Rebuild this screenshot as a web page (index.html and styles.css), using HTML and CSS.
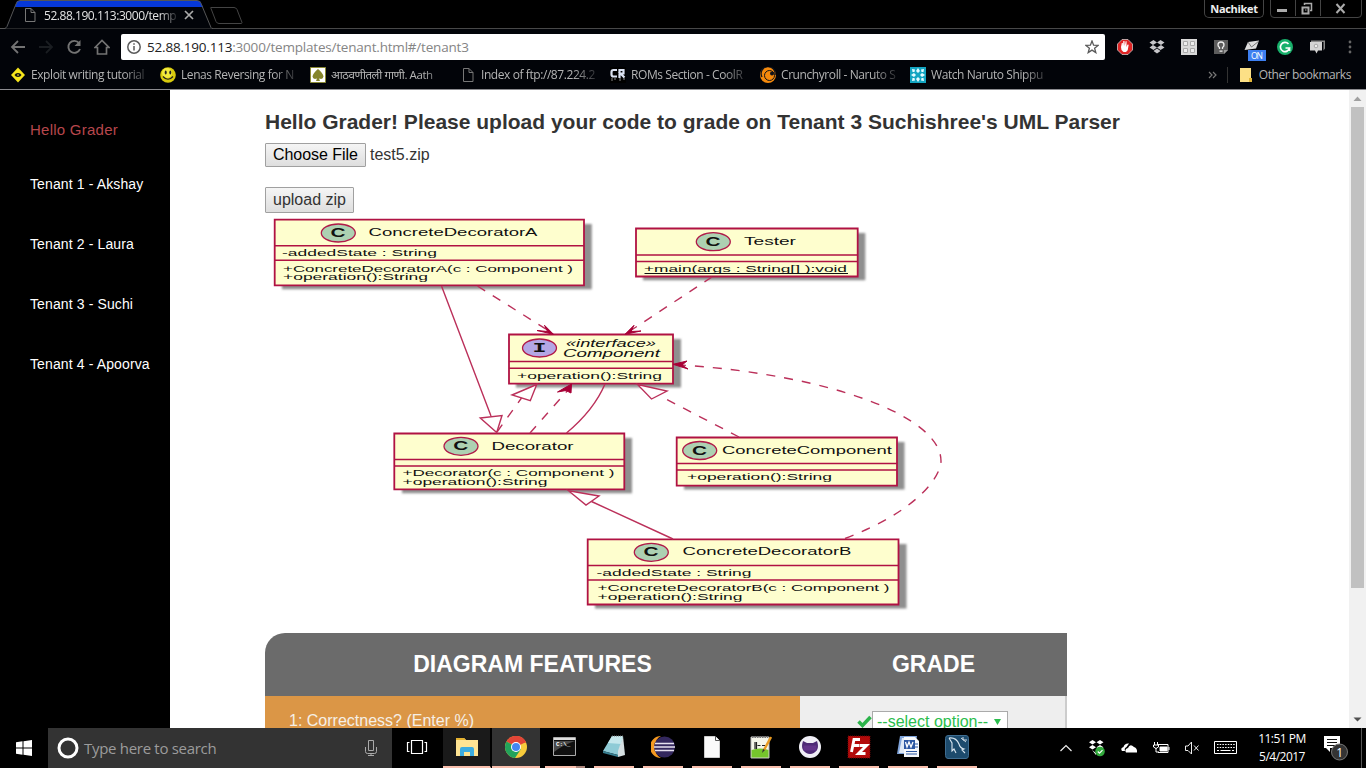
FILE: index.html
```html
<!DOCTYPE html>
<html lang="en">
<head>
<meta charset="utf-8">
<title>Tenant 3</title>
<link rel="stylesheet" href="styles.css">
</head>
<body>
<header class="browser">
  <div class="tabstrip">
    <svg class="tab-shape" width="260" height="29" viewBox="0 0 260 29" fill="none">
      <path d="M5 28.5L17 1h184l11 27.5z" fill="#020409"/>
      <path d="M17 1h183l3 6H15z" fill="#0638d8"/>
      <path d="M0 28.5h5q1-.5 2-2L16 4q1-3.500 4-3.500h177q3 0 4 3l10 24q.5 1 2 1" stroke="#555"/>
      <path d="M211 7.500h23q2 0 3 2l5 13q0 1-1 1h-22q-2 0-3-2l-5-13q-1-1 0-1z" stroke="#444"/>
    </svg>
    <div class="tab">
      <svg width="12" height="14" viewBox="0 0 12 14" fill="none" stroke="#777"><path d="M1.500.5h5.500l4 4v9H1.500zM7 .5v4h4"/></svg>
      <span class="tab-title">52.88.190.113:3000/temp</span>
      <svg width="10" height="10" viewBox="0 0 10 10" stroke="#aaa" stroke-width="1.700"><path d="M1 1l8 8M9 1L1 9"/></svg>
    </div>
    <div class="profile">Nachiket</div>
    <div class="winctl">
      <svg width="92" height="18" viewBox="0 0 92 18" fill="none" stroke="#ababab">
        <path d="M.5 0v14q0 3.500 3.500 3.500h84q3.500 0 3.500-3.500V0M25.500 0v16M50.500 0v16" stroke="#444"/>
        <path d="M7 10.500h10" stroke-width="3"/>
        <path d="M32.500 7.500h6v6h-6z" stroke-width="2"/><path d="M34.500 5V3.500h7v7H40" stroke-width="1.500"/><path d="M35 10h1.500"/>
        <path d="M66.500 4l8 9M74.500 4l-8 9" stroke-width="2"/>
      </svg>
    </div>
  </div>
  <div class="toolbar">
    <div class="nav">
      <svg width="16" height="16" viewBox="0 0 16 16" fill="none" stroke="#737373" stroke-width="1.800"><path d="M15 8H2M8 2L2 8l6 6"/></svg>
      <svg width="16" height="16" viewBox="0 0 16 16" fill="none" stroke="#1a1d21" stroke-width="1.800"><path d="M1 8h13M8 2l6 6-6 6"/></svg>
      <svg width="16" height="16" viewBox="0 0 16 16" fill="none" stroke="#737373" stroke-width="1.900"><path d="M13 4A6 6 0 1 0 14 10"/><path d="M14.500 1v6h-6z" fill="#737373" stroke="none"/></svg>
      <svg width="16" height="16" viewBox="0 0 16 16" fill="none" stroke="#737373" stroke-width="1.700"><path d="M1 8.500L8 1.500l7 7h-2.500V15h-9V8.500z"/></svg>
    </div>
    <div class="omnibox">
      <svg width="14" height="14" viewBox="0 0 14 14" fill="none" stroke="#5a5a5a" stroke-width="1.500"><circle cx="7" cy="7" r="6.200"/><path d="M7 6v4.500M7 3.200v1.600"/></svg>
      <span class="url"><span class="host">52.88.190.113</span>:3000/templates/tenant.html#/tenant3</span>
      <svg width="14" height="14" viewBox="0 0 14 14" fill="none" stroke="#5a5a5a" stroke-width="1.300"><path d="M7 1l1.600 4.200 4.500.2-3.500 2.800 1.200 4.400L7 10.100l-3.800 2.500 1.200-4.400L.9 5.400l4.500-.2z"/></svg>
    </div>
    <div class="exts">
      <svg width="16" height="16" viewBox="0 0 16 16"><path d="M5 .5h6L15.500 5v6L11 15.500H5L.5 11V5z" fill="#df2525" stroke="#ddd" stroke-width=".7"/><path d="M4 8l.8-4 1 0L6 7l.3-5h1.200l.3 5 .8-4.800h1L9.500 8l1-2.500 1.200.3-1 5.500-1.700 1.700H6.500L4.500 11z" fill="#fff"/></svg>
      <svg width="16" height="16" viewBox="0 0 16 16" fill="#c6c6c9"><path d="M4.500 1L8 3.500 4 6 .5 3.500zM11.500 1L8 3.500 12 6l3.500-2.500zM4 6l4 2.500L4.500 11 .5 8.500zM12 6L8 8.500l3.500 2.500 4-2.500zM4.500 12L8 9.500l3.500 2.500L8 14.500z"/></svg>
      <svg width="16" height="16" viewBox="0 0 16 16"><path d="M0 0h16v16H0z" fill="#d9d9d9"/><path d="M2.500 2.500h4v4h-4zM9.500 2.500h4v4h-4zM2.500 9.500h4v4h-4zM9.500 9.500h4v4h-4z" fill="#eee" stroke="#aaa"/></svg>
      <svg width="16" height="16" viewBox="0 0 16 16"><path d="M1 1h14v10l-4 4H1z" fill="#5c5c5c"/><path d="M15 11l-4 4v-4z" fill="#999"/><path d="M6.500 10V8.500Q5 7.500 5 6a3 3 0 0 1 6 0Q11 7.500 9.500 8.500V10M6.500 12.200h3" fill="none" stroke="#eee" stroke-width="1.300"/></svg>
      <svg class="wide" width="22" height="24" viewBox="0 0 22 24"><path d="M4 3l11-1.500-3 8L.500 11z" fill="#ddd"/><path d="M4 3l3.500 5L15 2" fill="none" stroke="#777"/><path d="M4 11h18v11H4z" fill="#3d7ff0"/><text x="7" y="19.800" class="on" textLength="12">ON</text></svg>
      <svg width="16" height="16" viewBox="0 0 16 16"><circle cx="8" cy="8" r="8" fill="#18b06b"/><path d="M11.500 5A4.600 4.600 0 1 0 12.500 9H8.500M12.500 9v3" fill="none" stroke="#fff" stroke-width="1.700"/></svg>
      <svg width="17" height="16" viewBox="0 0 17 16"><path d="M2 1.500h14v8l-1.500 2V3H2z" fill="#8c8c8c"/><path d="M1 3h12v8.500H9L7.500 14.500 6 11.500H1z" fill="#d4d4d4"/><circle cx="7" cy="7" r="1.800" fill="#eee" stroke="#999" stroke-width=".8"/></svg>
      <svg width="16" height="16" viewBox="0 0 16 16" fill="#666"><circle cx="8" cy="3" r="1.400"/><circle cx="8" cy="8" r="1.400"/><circle cx="8" cy="13" r="1.400"/></svg>
    </div>
  </div>
  <nav class="bookmarks">
    <div class="bm"><svg width="16" height="16" viewBox="0 0 16 16"><path d="M8 .5L15 8l-7 7.500L1 8z" fill="#f7e61c"/><path d="M4.500 8q1-2 3.500-2t3.500 2q-1 2-3.500 2T4.500 8z" fill="#111"/><path d="M7 8h2" stroke="#f7e61c"/></svg><span class="bm-text">Exploit writing tutorial</span></div>
    <div class="bm"><svg width="16" height="16" viewBox="0 0 16 16"><circle cx="8" cy="8" r="7.800" fill="#d8ca0d"/><circle cx="7" cy="6" r="5" fill="#f2ea3e"/><ellipse cx="5.700" cy="5.500" rx="1" ry="2" fill="#222"/><ellipse cx="10.300" cy="5.500" rx="1" ry="2" fill="#222"/><path d="M3 9.500q5 5.500 10 0" fill="none" stroke="#222" stroke-width="1.200"/></svg><span class="bm-text">Lenas Reversing for N</span></div>
    <div class="bm"><svg width="16" height="16" viewBox="0 0 16 16"><path d="M.5.500h15v15H.5z" fill="#fff" stroke="#8b8b35"/><path d="M8 2q5 4 5.500 7.500Q13 13 9 11.500L10 14H6l1-2.500q-4 1.500-4.500-2Q3 6 8 2z" fill="#85852b"/></svg><span class="bm-text hindi">आठवणीतली गाणी. Aath</span></div>
    <div class="bm"><svg width="16" height="16" viewBox="0 0 16 16" fill="none" stroke="#777"><path d="M3.500 1.500H9l4 4v9H3.500zM9 1.500v4h4"/></svg><span class="bm-text">Index of ftp://87.224.2</span></div>
    <div class="bm"><svg width="16" height="16" viewBox="0 0 16 16"><path d="M0 0h16v16H0z" fill="#000"/><path d="M7 3H3.500Q1.500 3 1.500 5V7.500Q1.500 9.500 3.500 9.500H7M9.500 11V3h4v3.500h-3l4 4" fill="none" stroke="#dce3f3" stroke-width="2.200"/><path d="M2 11v3M5 11v2M10 11v3M14 11v2" stroke="#888"/></svg><span class="bm-text">ROMs Section - CoolR</span></div>
    <div class="bm"><svg width="16" height="16" viewBox="0 0 16 16"><circle cx="8" cy="8" r="8" fill="#f5890c"/><path d="M2 10A7 7 0 1 1 15 8" fill="none" stroke="#10131a" stroke-width="1.300"/><circle cx="9.500" cy="8.500" r="5" fill="#f5890c" stroke="#10131a"/><circle cx="12" cy="6.500" r="2" fill="#10131a"/></svg><span class="bm-text">Crunchyroll - Naruto S</span></div>
    <div class="bm"><svg width="16" height="16" viewBox="0 0 16 16"><path d="M0 0h16v16H0z" fill="#13a5c2"/><path d="M8 1l2 3-2 2-2-2zM8 10l2 2-2 3-2-3zM1 8l3-2 2 2-2 2zM10 8l2-2 3 2-3 2zM2 2l3 .5-.5 2.500-2 0zM14 2l-3 .5.5 2.500 2 0zM2 14l3-.5-.5-2.500-2 0zM14 14l-3-.5.5-2.500 2 0z" fill="#e4fbff"/></svg><span class="bm-text">Watch Naruto Shippu</span></div>
    <div class="bm-end">
      <svg width="9" height="8" viewBox="0 0 9 8" fill="none" stroke="#777" stroke-width="1.200"><path d="M1 1l3 3-3 3M5 1l3 3-3 3"/></svg>
      <i class="sep"></i>
      <svg width="12" height="14" viewBox="0 0 12 14"><path d="M0 0h11v10h1v4H0z" fill="#fce086"/><path d="M9 14v-4h3v4z" fill="#e2b73b"/></svg>
      <span class="other">Other bookmarks</span>
    </div>
  </nav>
</header>

<div class="page">
  <aside class="sidebar">
    <div class="hello">Hello Grader</div>
    <a>Tenant 1 - Akshay</a>
    <a>Tenant 2 - Laura</a>
    <a>Tenant 3 - Suchi</a>
    <a>Tenant 4 - Apoorva</a>
  </aside>
  <main class="main">
    <h1 class="title">Hello Grader! Please upload your code to grade on Tenant 3 Suchishree's UML Parser</h1>
    <div class="file-row"><span class="btn choose">Choose File</span><span class="fname">test5.zip</span></div>
    <div><span class="btn upload">upload zip</span></div>
    <svg class="uml" width="700" height="400" viewBox="265 213 700 400">
      <defs>
        <filter id="soft" x="-10%" y="-20%" width="120%" height="150%"><feGaussianBlur stdDeviation="1.300"/></filter>
      </defs>
      <g class="shadow" filter="url(#soft)">
        <path d="M282 224h309.800v65.300h-309.800zM643 233h222.300v47.300H643zM516 339h165v48.500h-165zM402 438h230v55.300H402zM684 442h220.500v47.500h-220.500zM595 544h311.500v64.500H595z"/>
      </g>
      <g class="box">
        <path d="M274.700 219.700h309.300v65.600h-309.300zM636 228.500h221.700v48H636zM509 334.500h164v49.200h-164zM394.300 433.500h230v55.800h-230zM676.700 437.500h220.300v48.200h-220.300zM587.700 539.300h310.800v65.200h-310.800z"/>
        <path class="rule" d="M275 245.700h309M275 260.300h309M636 255h221.700M636 261.500h221.700M509 361.500h164M509 368.300h164M394 459.500h230M394 466h230M677 463.500h220M677 470h220M588 565.500h310.500M588 580h310.500"/>
      </g>
      <g class="dot">
        <ellipse cx="338.300" cy="233" rx="17" ry="9"/><ellipse cx="713.300" cy="241.700" rx="17" ry="9"/>
        <ellipse class="iface" cx="539.500" cy="348" rx="17" ry="9"/><ellipse cx="461" cy="446.300" rx="17" ry="9"/>
        <ellipse cx="699.700" cy="450.500" rx="17" ry="9"/><ellipse cx="651.300" cy="552.300" rx="17" ry="9"/>
      </g>
      <g class="letter">
        <text x="330.500" y="237" textLength="15" lengthAdjust="spacingAndGlyphs">C</text>
        <text x="705.500" y="245.700" textLength="15" lengthAdjust="spacingAndGlyphs">C</text>
        <text x="532.500" y="352" textLength="14" lengthAdjust="spacingAndGlyphs" class="mono">I</text>
        <text x="453.200" y="450.300" textLength="15" lengthAdjust="spacingAndGlyphs">C</text>
        <text x="692" y="454.500" textLength="15" lengthAdjust="spacingAndGlyphs">C</text>
        <text x="643.500" y="556.300" textLength="15" lengthAdjust="spacingAndGlyphs">C</text>
      </g>
      <g class="name">
        <text x="368.500" y="236" textLength="169" lengthAdjust="spacingAndGlyphs">ConcreteDecoratorA</text>
        <text x="744" y="245" textLength="52" lengthAdjust="spacingAndGlyphs">Tester</text>
        <text x="566" y="347" textLength="90" lengthAdjust="spacingAndGlyphs" class="it">«interface»</text>
        <text x="563" y="356.700" textLength="97" lengthAdjust="spacingAndGlyphs" class="it">Component</text>
        <text x="491.500" y="449.500" textLength="82" lengthAdjust="spacingAndGlyphs">Decorator</text>
        <text x="722" y="453.800" textLength="170" lengthAdjust="spacingAndGlyphs">ConcreteComponent</text>
        <text x="682.500" y="555.400" textLength="169" lengthAdjust="spacingAndGlyphs">ConcreteDecoratorB</text>
      </g>
      <g class="member">
        <text x="282" y="256" textLength="155" lengthAdjust="spacingAndGlyphs">-addedState : String</text>
        <text x="283" y="272" textLength="290" lengthAdjust="spacingAndGlyphs">+ConcreteDecoratorA(c : Component )</text>
        <text x="283" y="280.400" textLength="145" lengthAdjust="spacingAndGlyphs">+operation():String</text>
        <text x="644" y="271.800" textLength="203" lengthAdjust="spacingAndGlyphs">+main(args : String[] ):void</text>
        <text x="517" y="379.400" textLength="145" lengthAdjust="spacingAndGlyphs">+operation():String</text>
        <text x="402.500" y="476.300" textLength="212" lengthAdjust="spacingAndGlyphs">+Decorator(c : Component )</text>
        <text x="402.500" y="485" textLength="145" lengthAdjust="spacingAndGlyphs">+operation():String</text>
        <text x="687" y="480.400" textLength="145" lengthAdjust="spacingAndGlyphs">+operation():String</text>
        <text x="596.500" y="575.800" textLength="155" lengthAdjust="spacingAndGlyphs">-addedState : String</text>
        <text x="597.500" y="591.200" textLength="292" lengthAdjust="spacingAndGlyphs">+ConcreteDecoratorB(c : Component )</text>
        <text x="597.500" y="600" textLength="145" lengthAdjust="spacingAndGlyphs">+operation():String</text>
      </g>
      <path d="M644.500 273.500H848" stroke="#111"/>
      <g class="edge">
        <path d="M441.500 286L491 416M605 384Q594 410 566.500 433M591.500 501.500L673 539"/>
        <path class="head" d="M480.300 418L502 415.500 496.700 432.500zM536.700 384.500L512 395l18.300 5.700zM637.500 384.500L667 391l-15.500 8zM568.500 490.700L599 496l-13 9z"/>
        <g class="dash">
          <path d="M477.500 286L549 331M712 277L630 331M497 432L521.500 398M530 433L568 390M739 437L660 396"/>
          <path d="M845 538.500C920 510 941 475 941 461C941 417 833 375 681 365"/>
        </g>
        <path class="arrow" d="M553.500 334.300l-9-9 3 6.200-10.500-1zM625 334.300l9-9-3 6.200 10 -.5zM571.500 384l-14 8 8.500-1.500 5 2.500zM673 364.300l14-3.300-5 4 6 4z"/>
      </g>
    </svg>
    <div class="table">
      <div class="th">DIAGRAM FEATURES</div><div class="th">GRADE</div>
      <div class="td d1">1: Correctness? (Enter %)</div>
      <div class="td d2"><svg width="15" height="13" viewBox="0 0 15 13" fill="none" stroke="#2bb34a" stroke-width="3.500"><path d="M1.500 6.500l4 4 8-8.500"/></svg><span class="select"><span>--select option--</span><svg width="7" height="7" viewBox="0 0 7 7" fill="#2bbd4d"><path d="M0 0h7L3.500 6z"/></svg></span></div>
    </div>
  </main>
  <div class="scrollbar">
    <svg width="17" height="17" viewBox="0 0 17 17" fill="#a0a0a0"><path d="M4.500 11h8l-4-4.500z"/></svg>
    <div class="thumb"></div>
    <svg width="17" height="17" viewBox="0 0 17 17" fill="#505050"><path d="M4.500 6.500h8l-4 4z"/></svg>
  </div>
</div>

<footer class="taskbar">
  <div class="start"><svg width="16" height="16" viewBox="0 0 16 16" fill="#fff"><path d="M0 2.200l6.500-.9v6.200H0zM7.500 1.200L16 0v7.500H7.500zM0 8.500h6.500v6.200L0 13.800zM7.500 8.500H16V16l-8.500-1.200z"/></svg></div>
  <div class="search">
    <svg width="22" height="22" viewBox="0 0 22 22" fill="none" stroke="#fff" stroke-width="3"><circle cx="11" cy="11" r="9"/></svg>
    <span class="ph">Type here to search</span>
    <svg width="12" height="16" viewBox="0 0 12 16" fill="none" stroke="#aaa"><path d="M3.500.5h5v10h-5zM.5 7v4.500q0 2 2 2h7q2 0 2-2V7M6 13.500v2M3 15.500h6"/></svg>
  </div>
  <div class="apps">
    <div class="app tv"><svg width="22" height="16" viewBox="0 0 22 16" fill="none" stroke="#fff" stroke-width="1.200"><path d="M5.500 1.500h11v13h-11zM3.500 3.500H1.500v9h2M18.500 3.500h2v9h-2"/></svg></div>
    <div class="app explorer"><svg width="24" height="20" viewBox="0 0 24 20"><path d="M1 1h8l2 2h12v16H1z" fill="#ffe493"/><path d="M1 1h8l2 2H1z" fill="#e6b331"/><path d="M5 19v-7q0-2 2-2h10q2 0 2 2v7h-4v-4H9v4z" fill="#3cace0"/></svg></div>
    <div class="app chrome"><svg width="22" height="22" viewBox="0 0 22 22"><circle cx="11" cy="11" r="11" fill="#f8cb3b"/><path d="M11 11L1.500 5.500A11 11 0 0 1 21 6z" fill="#e24537"/><path d="M11 11L1.500 5.500A11 11 0 0 0 10 22l6-9z" fill="#22a35b"/><path d="M11 6h10" stroke="#e24537" stroke-width="1"/><circle cx="11" cy="11" r="5" fill="#fff"/><circle cx="11" cy="11" r="4" fill="#4487f4"/></svg></div>
    <div class="app run cmd"><svg width="23" height="20" viewBox="0 0 23 20"><path d="M.5.500h22v18H.5z" fill="#101010" stroke="#aaa"/><path d="M1 2h21" stroke="#ddd" stroke-width="2"/><path d="M1 4h21Q10 8 1 15z" fill="#4a4a4a"/><text x="3" y="9" class="prompt">C:\_</text></svg></div>
    <div class="app run"><svg width="24" height="24" viewBox="0 0 24 24"><path d="M10 1h11l-5 19-15-4z" fill="#8fcbd6"/><path d="M21 1l2 19-7 2V16z" fill="#d5dfe2"/><path d="M10 1h11l-2 8-13-1z" fill="#c5e7ec"/><path d="M1 16l15 4v2L1 18z" fill="#377e91"/><path d="M10 1h11" stroke="#777" stroke-dasharray="1 1"/></svg></div>
    <div class="app run"><svg width="24" height="22" viewBox="0 0 24 22"><path d="M10 0A11 11 0 0 0 10 22Q4 19 4 11T10 0z" fill="#f59a22"/><circle cx="13.500" cy="11" r="10.500" fill="#34285e"/><path d="M4 7.500h19M3 11h21M4 14.500h19" stroke="#e6e1ef" stroke-width="1.700"/></svg></div>
    <div class="app run"><svg width="16" height="22" viewBox="0 0 16 22"><path d="M.5.500h11l4 4v17H.5z" fill="#fafafa" stroke="#ccc"/><path d="M11.500 0v4.500H16" fill="none" stroke="#555"/></svg></div>
    <div class="app run"><svg width="22" height="24" viewBox="0 0 22 24"><path d="M1 2h18v21H1z" fill="#f5f5ea" stroke="#bbb"/><path d="M1.500 15q8-3 17 0v7.500h-17z" fill="#75c52c"/><path d="M2 2h16" stroke="#777" stroke-width="2" stroke-dasharray="1.500 1"/><path d="M5 7v7M7.500 10.500h3M12 10.500h3M6.500 7v7" stroke="#222" stroke-width="1.200"/><path d="M21 2L14 15" stroke="#e89a21" stroke-width="2.500"/><path d="M13 14L12 18l3-3z" fill="#333"/></svg></div>
    <div class="app run"><svg width="22" height="22" viewBox="0 0 22 22"><circle cx="11" cy="11" r="11" fill="#f0eff6"/><path d="M4 5l4 2h6l4-2q2 6 0 9-3 4-7 4t-7-4q-2-3 0-9z" fill="#4e2b76"/><path d="M4.500 12h13" stroke="#63358a" stroke-width="5"/></svg></div>
    <div class="app run"><svg width="24" height="24" viewBox="0 0 24 24"><path d="M1 1h22v22H1z" fill="#b30a0a" stroke="#6b0707" stroke-dasharray="1 1"/><path d="M13 4.500H7L4.500 17M6 10.500h6M12.500 10.500h7l-8 8h7" fill="none" stroke="#fff" stroke-width="2.900"/></svg></div>
    <div class="app run"><svg width="24" height="24" viewBox="0 0 24 24"><path d="M4 1h17l-3 18H1Z" fill="#80a4da"/><path d="M6 3h13v15H3z" fill="#dfe9f6"/><path d="M8 2h11l4 4v16H8z" fill="#f7f9fc"/><path d="M8 5h11v9H8z" fill="#2d58a3"/><path d="M9.500 7l1.500 5 2-5 2 5 2-5" fill="none" stroke="#fff" stroke-width="1.300"/><path d="M10 16.500h11M10 19h11M19 9h3M19 12h3" stroke="#2d58a3"/></svg></div>
    <div class="app run"><svg width="24" height="24" viewBox="0 0 24 24"><path d="M3 .5h18q2.500 0 2.500 3v17q0 3-2.500 3H3q-2.500 0-2.500-3v-17q0-3 2.500-3z" fill="#1d4b6d" stroke="#3f6d91"/><path d="M4 3q7-1 10 6 1 4 5 5l-2 1 3 3M4 3l3 5v8l2-2 2 4" fill="none" stroke="#dde9f2" stroke-width="1.100"/><path d="M16 3l5 4M18 2v3h4" stroke="#cfdbe4" fill="none"/></svg></div>
  </div>
  <div class="tray">
    <svg class="up" width="14" height="16" viewBox="0 0 14 16" fill="none" stroke="#eee" stroke-width="1.200"><path d="M1.500 11L7 5.500l5.500 5.500"/></svg>
    <svg width="18" height="18" viewBox="0 0 18 18" fill="#fff"><path d="M4.500 1L8 3.200 4.500 5.400 1 3.200zM12 1L8.500 3.200 12 5.400l3.500-2.200zM4.500 6L8 8.200 4.500 10.400 1 8.200zM12 6L8.500 8.200 12 10.400l3.500-2.200zM4 11l4 3v2z"/><circle cx="12" cy="12.500" r="4.800" fill="#32a93c"/><path d="M9.800 12.500l1.700 1.700 3-3" stroke="#fff" stroke-width="1.200" fill="none"/></svg>
    <svg width="18" height="16" viewBox="0 0 18 16" fill="#fff"><path d="M2 11Q0 8 3.500 7 4.500 3 9 3.500L6.500 7Q4 8 5 11z"/><path d="M6 12.500q-2-3 2-4.500Q10 3 14 7q3.500 1 3 5.500z"/></svg>
    <svg width="18" height="16" viewBox="0 0 18 16" fill="none" stroke="#fff"><path d="M6 4.500h10v8H6M17 7v3M2.500 2v3M5.500 2v3M1.500 5h5v2q-2.500 3-5 0zM4 8v4h3"/><path d="M8 7h7v4H8z" fill="#fff"/></svg>
    <svg width="16" height="16" viewBox="0 0 16 16" fill="none" stroke="#eee"><path d="M1.500 6h2.500l3.500-4v12L4 10.500H1.500zM10 5.500l4.500 5M14.500 5.500l-4.500 5"/></svg>
    <svg width="24" height="14" viewBox="0 0 24 14" fill="none" stroke="#fff"><path d="M.5.500h22v12H.5z"/><path d="M3 3.500h18M3 6.500h18" stroke-dasharray="1.500 1.200"/><path d="M3 9.500h2M6.500 9.500h10M18 9.500h2"/></svg>
    <div class="clock"><span>11:51 PM</span><span>5/4/2017</span></div>
    <div class="notif"><svg width="26" height="26" viewBox="0 0 26 26"><path d="M1 1h16v12H7v4l-4-4H1z" fill="#fff"/><path d="M4 4.500h10M4 7.500h10M4 10.500h8" stroke="#111"/><circle cx="16.500" cy="17" r="8" fill="#343434" stroke="#777"/><text x="13.300" y="21.500" class="badge">1</text></svg></div>
    <i class="peek"></i>
  </div>
</footer>
</body>
</html>
```
FILE: styles.css
```css
* { box-sizing: border-box; }
body { margin: 0; width: 1366px; height: 768px; overflow: hidden; display: flex; flex-direction: column; background: #fff; font-family: "Liberation Sans", Arial, sans-serif; }
svg { display: block; flex: none; }
.browser { height: 90px; flex: none; background: #020409; color: #b4b4b4; font-family: "Open Sans", "Noto Sans", sans-serif; border-bottom: 1px solid #8c8c90; }
.tabstrip { height: 29px; background: #000; border-bottom: 1px solid #484848; position: relative; display: flex; }
.tab-shape { position: absolute; left: 0; top: 0; }
.tab { position: relative; width: 200px; padding: 2px 6px 0 24px; display: flex; align-items: center; height: 28px; }
.tab-title { margin-left: 8px; width: 137px; margin-right: 3px; white-space: nowrap; font-size: 12px; letter-spacing: -0.45px; color: #e4e4e4; mask-image: linear-gradient(90deg, #000 115px, transparent 136px); }
.profile { margin-left: auto; width: 60px; height: 18px; border: 1px solid #444; border-top: 0; border-radius: 0 0 5px 5px; text-align: center; font-size: 11px; line-height: 17px; letter-spacing: -0.3px; font-weight: 700; color: #eee; }
.winctl { margin: 0 4px 0 6px; }
.toolbar { height: 35px; padding: 5px 9px 4px 10px; display: flex; align-items: center; }
.nav { display: flex; gap: 12px; }
.omnibox { margin-left: 11px; width: 984px; height: 26px; background: #fff; border-radius: 2px; padding: 0 6px; display: flex; align-items: center; flex: none; }
.url { margin-left: 6px; flex: 1; font-size: 13.500px; letter-spacing: -0.2px; color: #858585; }
.host { color: #222; }
.exts { margin-left: 12px; display: flex; gap: 16px; align-items: flex-start; height: 16px; flex: none; }
.wide { margin: 0 -5px 0 -1px; }
.on { font: 8.500px "Open Sans", sans-serif; fill: #fff; }
.bookmarks { height: 25px; padding: 0 15px 4px 10px; display: flex; align-items: center; font-size: 12px; letter-spacing: -0.42px; }
.bm { width: 150px; display: flex; align-items: center; flex: none; }
.bm-text { margin-left: 5px; width: 124px; white-space: nowrap; mask-image: linear-gradient(90deg, #000 92px, transparent 122px); }
.hindi { font-size: 11.500px; }
.bm-end { margin-left: auto; display: flex; align-items: center; white-space: nowrap; }
.sep { width: 1px; height: 16px; background: #333; margin: 0 12px 0 10px; }
.other { margin-left: 7px; }
.page { height: 638px; flex: none; display: flex; overflow: hidden; }
.sidebar { width: 170px; flex: none; background: #000; padding: 30px 0 0 30px; color: #fff; white-space: nowrap; }
.hello { font-size: 15px; letter-spacing: 0.25px; line-height: 20px; color: #b7474c; margin-bottom: 34px; }
.sidebar a { display: block; font-size: 14px; letter-spacing: 0.12px; line-height: 20px; margin-bottom: 40px; }
.main { flex: 1; padding: 17px 0 0 95px; color: #333; min-width: 0; }
.title { margin: 0; font-size: 21px; line-height: 30px; font-weight: bold; white-space: nowrap; }
.file-row { margin-top: 6px; height: 24px; display: flex; align-items: center; font-size: 16px; margin-bottom: 20px; }
.btn { display: inline-block; height: 24px; line-height: 21px; border: 1px solid #a0a0a0; border-radius: 1px; background: linear-gradient(#f5f5f5, #dedede); padding: 0 7px; font-size: 16px; white-space: nowrap; }
.choose { width: 101px; color: #000; letter-spacing: -0.05px; }
.upload { width: 89px; height: 26px; line-height: 23px; display: block; }
.fname { margin-left: 4px; }
.uml { overflow: visible; }
.shadow { fill: #8f8f8f; }
.box { fill: #fefece; stroke: #b01243; stroke-width: 1.800; }
.rule { stroke-width: 1.400; }
.dot { fill: #add1b2; stroke: #b01a48; stroke-width: 1.300; }
.iface { fill: #b4a7e5; }
.letter { font: bold 12px "Liberation Sans", sans-serif; fill: #111; }
.mono { font-family: "Liberation Mono", monospace; }
.name { font: 11px "Liberation Sans", sans-serif; fill: #111; }
.it { font-style: italic; }
.member { font: 9.800px "Liberation Sans", sans-serif; fill: #111; }
.edge { fill: none; stroke: #bb305a; stroke-width: 1.400; }
.head { fill: #fff; }
.dash { stroke-dasharray: 9 9; }
.arrow { fill: #a80036; stroke: #a80036; stroke-width: 1; }
.table { margin-top: 20px; width: 802px; display: grid; grid-template-columns: 535px 267px; border-top-left-radius: 20px; overflow: hidden; }
.th { height: 63px; line-height: 62px; background: #6b6b6b; color: #fff; font-weight: bold; font-size: 23px; text-align: center; }
.td { height: 60px; font-size: 16px; }
.d1 { background: #db9646; color: #f5efe6; padding: 16px 24px; line-height: 18px; }
.d2 { background: #eee; border-right: 2px solid #ccc; padding: 15px 0 0 57px; display: flex; align-items: flex-start; }
.d2 > svg { margin-top: 4px; }
.select { width: 136px; height: 22px; border: 1px solid #aaa; background: #fff; color: #2bbd4d; display: flex; align-items: center; padding: 0 6px 0 4px; justify-content: space-between; }
.scrollbar { width: 17px; flex: none; background: #f1f1f1; display: flex; flex-direction: column; align-items: center; }
.thumb { width: 13px; height: 481px; background: #c1c1c1; margin-bottom: auto; }
.taskbar { height: 40px; flex: none; background: #000; display: flex; font-family: "Open Sans", "Noto Sans", sans-serif; color: #fff; }
.start { width: 48px; display: flex; align-items: center; justify-content: center; }
.search { width: 344px; background: #333; display: flex; align-items: center; padding: 0 15px 0 9px; }
.ph { margin-left: 5px; flex: 1; font-size: 15px; letter-spacing: -0.3px; color: #9c9c9c; }
.apps { display: flex; }
.app { width: 49px; height: 40px; display: flex; align-items: center; justify-content: center; border: 0 solid #000; border-bottom: 2px solid transparent; }
.tv { width: 51px; padding-right: 2px; }
.explorer { width: 48px; background: #1a1a1a; border-bottom-color: #f9bfad; border-right: 1px solid #000; }
.chrome { margin-left: 1px; width: 48px; background: #333; border-bottom-color: #f9bfad; }
.run { position: relative; }
.run::after { content: ""; position: absolute; left: 5px; right: 4px; bottom: -2px; height: 2px; background: #f9bfad; }
.cmd::after { background: linear-gradient(90deg, #f9bfad 31px, #ad877d 31px); }
.prompt { font: bold 6px "Liberation Mono", monospace; fill: #fff; }
.tray { margin-left: auto; display: flex; align-items: center; }
.tray > svg { margin-right: 14px; }
.tray > .up { margin-right: 15px; }
.clock { width: 54px; margin: 0 14px 0 3px; font-size: 12px; line-height: 18px; text-align: center; white-space: nowrap; letter-spacing: -0.5px; display: flex; flex-direction: column; }
.notif { width: 26px; margin-right: 12px; }
.badge { font: 12px "Open Sans", sans-serif; fill: #fff; }
.peek { width: 1px; height: 40px; background: #555; margin-right: 4px; }
```
